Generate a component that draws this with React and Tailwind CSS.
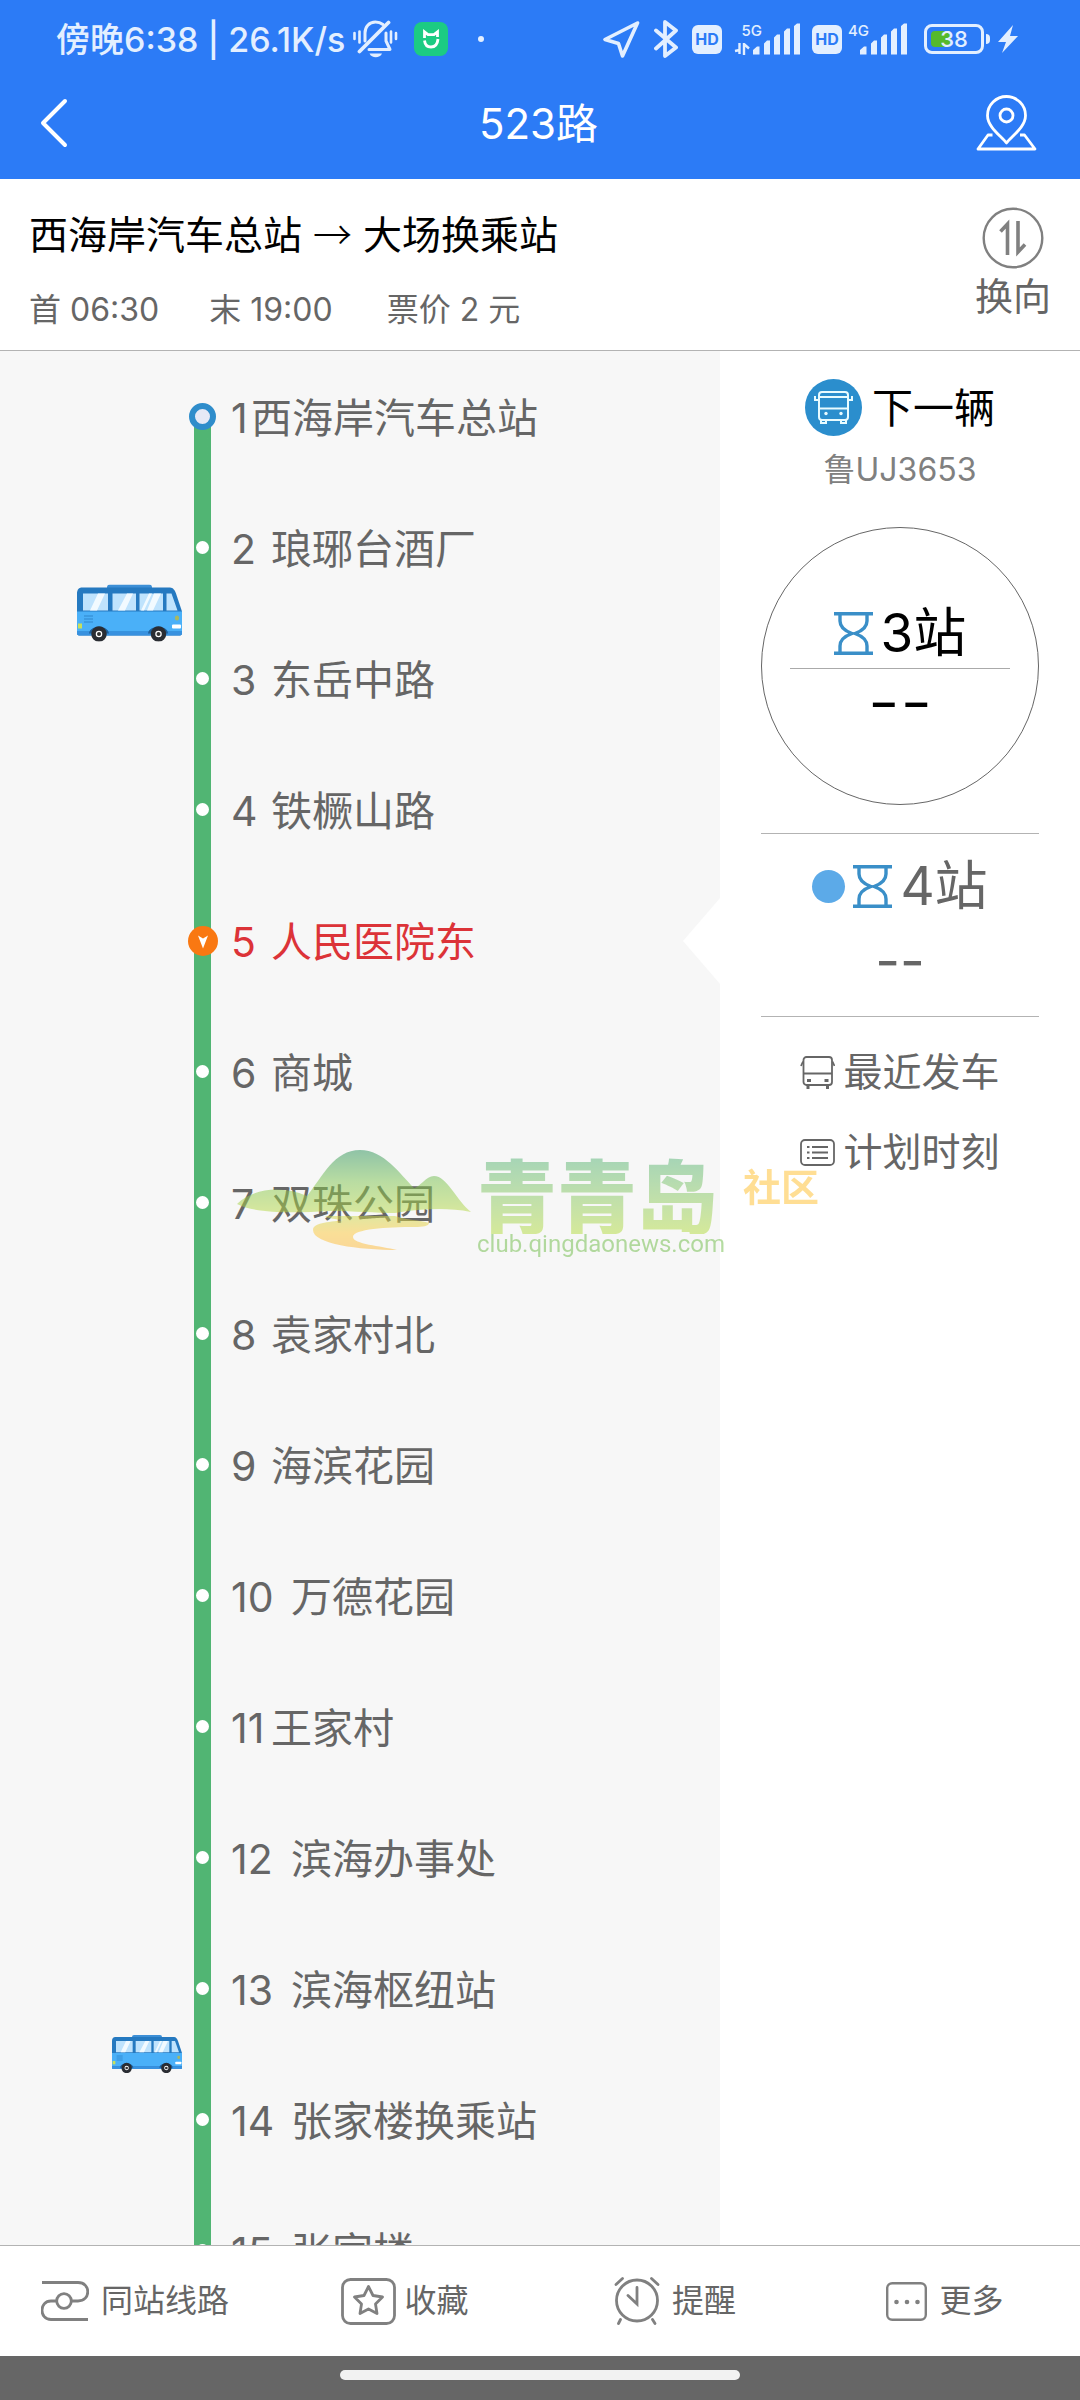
import React from 'react';

const stops = [
  { no: '1', name: '西海岸汽车总站', numWidth: 'w-5', start: true },
  { no: '2', name: '琅琊台酒厂', numWidth: 'w-10', bus: 'large' },
  { no: '3', name: '东岳中路', numWidth: 'w-10' },
  { no: '4', name: '铁橛山路', numWidth: 'w-10' },
  { no: '5', name: '人民医院东', numWidth: 'w-10', current: true },
  { no: '6', name: '商城', numWidth: 'w-10' },
  { no: '7', name: '双珠公园', numWidth: 'w-10' },
  { no: '8', name: '袁家村北', numWidth: 'w-10' },
  { no: '9', name: '海滨花园', numWidth: 'w-10' },
  { no: '10', name: '万德花园', numWidth: 'w-15' },
  { no: '11', name: '王家村', numWidth: 'w-10' },
  { no: '12', name: '滨海办事处', numWidth: 'w-15' },
  { no: '13', name: '滨海枢纽站', numWidth: 'w-15', bus: 'small' },
  { no: '14', name: '张家楼换乘站', numWidth: 'w-15' },
  { no: '15', name: '张家楼', numWidth: 'w-15' },
];

/* ---------- Icons ---------- */

const MutedBell = () => (
  <svg className="w-[45px] h-[38px]" viewBox="0 0 45 38" fill="none" stroke="currentColor" strokeWidth="3" strokeLinecap="round">
    <path d="M1.500 13v6M6.500 11.500v11M38 11.500v11M43 13v6" strokeWidth="2.600" />
    <path d="M35.500 2.500L6.500 31.500" strokeWidth="3.800" />
    <path d="M12 21V13C12 7 16 2 22.500 2c3 0 5.500 1 7.500 2.500" />
    <path d="M33 13v8l4 8.500H16" strokeLinejoin="round" />
    <path d="M16.500 33.500h12.500c-2 5-10.500 5-12.500 0z" fill="currentColor" stroke="none" />
  </svg>
);

const MiIcon = () => (
  <svg className="w-[34px] h-[34px]" viewBox="0 0 34 34" fill="none">
    <rect width="34" height="34" rx="8" fill="#1ccb83" />
    <path d="M10.500 16V9.800l3.500 2.800h6l3.500-2.800v5.200" stroke="#fff" strokeWidth="2.800" />
    <path d="M10.500 18.500c.5 4.500 3 6.500 6.500 6.500s6.500-2.500 7-8" stroke="#fff" strokeWidth="2.800" />
  </svg>
);

const LocationArrow = () => (
  <svg className="w-[37px] h-[38px]" viewBox="0 0 37 38" fill="none" stroke="currentColor" strokeWidth="3.600" strokeLinejoin="round">
    <path d="M34.500 3L2 19.500l13.500 4L19.500 36z" />
  </svg>
);

const BluetoothIcon = () => (
  <svg className="w-6 h-[38px]" viewBox="0 0 24 38" fill="none" stroke="currentColor" strokeWidth="3.800" strokeLinecap="round" strokeLinejoin="round">
    <path d="M2 10.500L22 27.500 11 36V2l11 8.500L2 28.500" />
  </svg>
);

const Bars = () => (
  <svg className="w-12 h-8" viewBox="0 0 48 32" fill="currentColor">
    <path d="M0 31.500v-4.500l4-3.500h2.500v8zM11 31.500V20.500l3-3h3v14zM21 31.500V14.500l3-3h3v20zM31 31.500V8.500l3-3h3v26zM41 31.500V3l3-2.500h3v31z" />
  </svg>
);

const BoltIcon = () => (
  <svg className="w-5 h-7" viewBox="0 0 20 28" fill="currentColor">
    <path d="M15 0L0 17h8L4 28 20 11h-8z" />
  </svg>
);

const BackIcon = () => (
  <svg className="w-7 h-[50px]" viewBox="0 0 28 50" fill="none" stroke="currentColor" strokeWidth="4" strokeLinecap="round" strokeLinejoin="round">
    <path d="M25 3L3 25l22 22" />
  </svg>
);

const MapPinIcon = () => (
  <svg className="w-[61px] h-14" viewBox="0 0 61 56" fill="none" stroke="currentColor" strokeWidth="2.800" strokeLinejoin="round">
    <path d="M30.500 48C25 41 11.500 32 11.500 20.500a19 19 0 0 1 38 0C49.500 32 36 41 30.500 48z" />
    <circle cx="30.500" cy="20.500" r="6.500" />
    <path d="M16.500 40h-4.500L2 54h57L48.500 40H44" />
  </svg>
);

const SwapIcon = () => (
  <svg className="w-[62px] h-[62px]" viewBox="0 0 62 62" fill="none" stroke="#808080">
    <circle cx="31" cy="31" r="29.300" strokeWidth="2.400" />
    <path d="M25.500 48V17l-7 7.500M36 14v31l7-7.500" strokeWidth="3.600" />
  </svg>
);

const Bus = ({ className }) => (
  <svg className={className} viewBox="0 0 105 57">
    <rect x="30" y="0" width="45" height="8" rx="3" fill="#3d8fd6" />
    <path d="M5 3h88c3 0 5 3 6 6l6 18v22c0 1-1 2-2 2H2c-1 0-2-1-2-2V9c0-4 2-6 5-6z" fill="#2579c0" />
    <path d="M0 27h105v20H0z" fill="#4ab0f8" />
    <path d="M0 47h105v2c0 1-1 2-2 2H2c-1 0-2-1-2-2z" fill="#3891df" />
    <path d="M6 9h25v17H6zM35.500 9h23.500v17H35.500zM62.500 9H86v17H62.500zM89.500 9h5l6 17h-11z" fill="#bfe3fd" />
    <path d="M21 9h7l-8 17h-7zM50 9h6l-8 17h-7zM77 9h7l-8 17h-6zM72 9h3l-8 17h-3z" fill="#f2faff" />
    <path d="M7 31.500h9M7 34.500h9M7 37.500h9" stroke="#2f85cc" strokeWidth="1.200" />
    <rect x="1" y="39" width="4" height="5" fill="#c8e05c" />
    <rect x="98" y="31" width="4" height="5" rx="2" fill="#a8b860" />
    <rect x="95" y="40" width="9" height="4" rx="1" fill="#fff" />
    <path d="M12 49c1-9 19-9 20 0zM71 49c1-9 20-9 20 0z" fill="#1d5e98" />
    <g fill="#fff" stroke="#2a2d33" strokeWidth="4.500">
      <circle cx="22" cy="49.500" r="5.500" />
      <circle cx="81.500" cy="49.500" r="5.500" />
    </g>
    <circle cx="22" cy="49.500" r="2" fill="#333" />
    <circle cx="81.500" cy="49.500" r="2" fill="#333" />
  </svg>
);

const NextBusIcon = () => (
  <svg className="w-[57px] h-[57px]" viewBox="0 0 57 57" fill="none" stroke="#e8fbff" strokeWidth="2">
    <circle cx="28.500" cy="28.500" r="28.500" fill="#2b8ecd" stroke="none" />
    <rect x="14" y="13" width="29" height="28" rx="3" />
    <path d="M14 18h29M14 29.500h29M14 21h-4v-4M43 21h4v-4M16 41v3h5v-3M36 41v3h5v-3" />
    <circle cx="21" cy="34.500" r="1.700" fill="#e8fbff" stroke="none" />
    <circle cx="36" cy="34.500" r="1.700" fill="#e8fbff" stroke="none" />
  </svg>
);

const Hourglass = () => (
  <svg className="w-[39px] h-[43px]" viewBox="0 0 39 43" fill="none" stroke="#3a8fc8" strokeWidth="3.400">
    <path d="M0 1.800h39M0 41.200h39" />
    <path d="M6 2v7c0 6 5 10 12 12.500C11 24 6 28 6 34v7M33 2v7c0 6-5 10-12 12.500C28 24 33 28 33 34v7" />
  </svg>
);

const BusOutline = () => (
  <svg className="w-[35px] h-[33px]" viewBox="0 0 35 33" fill="none" stroke="#666" strokeWidth="1.800">
    <rect x="3.500" y="1" width="28.500" height="28" rx="3" />
    <path d="M3.500 17.500h28.500M3 5.500L1 10M32.500 5.500l2 4.500" />
    <path d="M7 24.500h4M24.500 24.500h4M8 29v4M27.500 29v4" strokeWidth="3" />
  </svg>
);

const ListIcon = () => (
  <svg className="w-[35px] h-[27px]" viewBox="0 0 35 27" fill="none" stroke="#666" strokeWidth="1.800">
    <rect x="1" y="1" width="33" height="25" rx="4" />
    <path d="M12 8h16M12 13.500h16M12 19h16M7 8h2.500M7 13.500h2.500M7 19h2.500" strokeWidth="2.200" />
  </svg>
);

const SameStopIcon = () => (
  <svg className="w-12 h-[42px]" viewBox="0 0 48 42" fill="none" stroke="#808080" strokeWidth="2.800">
    <path d="M1 2.500h36c13 0 13 18.500 0 18.500h-7M47 39.500H10c-12 0-12-18.500 0-18.500h6" />
    <circle cx="23" cy="21" r="7.300" />
  </svg>
);

const FavoriteIcon = () => (
  <svg className="w-[55px] h-[47px]" viewBox="0 0 55 47" fill="none" stroke="#808080" strokeWidth="2.800" strokeLinejoin="round">
    <rect x="1.500" y="1.500" width="52" height="44" rx="8" />
    <path d="M27.500 8.500l4.500 9 9.500 1.500-7 7 1.500 9.500-8.500-4.500-8.500 4.500L20.500 26l-7-7 9.500-1.500z" />
  </svg>
);

const AlarmIcon = () => (
  <svg className="w-[46px] h-12" viewBox="0 0 46 48" fill="none" stroke="#808080" strokeWidth="2.800" strokeLinecap="round">
    <circle cx="23" cy="23.500" r="20.500" />
    <path d="M23 10.500V27L14 18.500M2 7.500L8.500 1.500M44 7.500L37.500 1.500M6.500 42.500L4.500 46.500M38.500 42.500L41 46.500" />
  </svg>
);

const MoreIcon = () => (
  <svg className="w-[41px] h-[39px]" viewBox="0 0 41 39" fill="none" stroke="#808080" strokeWidth="2.400">
    <rect x="1.200" y="1.200" width="38.600" height="36.600" rx="5" />
    <g fill="#808080" stroke="none">
      <circle cx="10.500" cy="20" r="2.300" />
      <circle cx="21" cy="20" r="2.300" />
      <circle cx="31.500" cy="20" r="2.300" />
    </g>
  </svg>
);

const Mountain = () => (
  <svg className="w-[234px] h-[100px]" viewBox="0 0 234 100">
    <defs>
      <linearGradient id="hill" x1="0" y1="0" x2="0" y2="1">
        <stop offset="0" stopColor="#2a9159" />
        <stop offset="0.500" stopColor="#7cc34f" />
        <stop offset="1" stopColor="#b9da45" />
      </linearGradient>
      <linearGradient id="river" x1="0" y1="0" x2="0" y2="1">
        <stop offset="0" stopColor="#cdd94a" />
        <stop offset="0.500" stopColor="#fdc83a" />
        <stop offset="1" stopColor="#fdb83a" />
      </linearGradient>
    </defs>
    <path d="M0 54c14-14 42-20 70-8C86 26 97 0 123 0c24 0 40 24 54 38 6-1 12-12 20-12 13 0 22 24 37 36-26-5-50-3-76 1-20 0-40-2-66-2C60 63 18 64 0 54z" fill="url(#hill)" />
    <path d="M88 66h70c10 4 26 4 34 7 0 3-6 4-14 4-28 0-62 2-62 10 0 7 28 9 44 13-38 0-84-6-84-20 0-8 20-8 30-10-8-1-14-1-18-4z" fill="url(#river)" />
  </svg>
);

/* ---------- Sections ---------- */

const HdBadge = () => (
  <span className="flex items-center justify-center w-[30px] h-[29px] rounded-md bg-[#e3efff] text-[#2c7bf6] text-base leading-none font-bold">
    HD
  </span>
);

const StatusBar = () => (
  <div className="flex items-center justify-between h-[78px] pl-14 pr-[62px] text-[#e3efff]">
    <div className="flex items-center">
      <span className="text-[34px] leading-10 font-medium whitespace-pre pt-[2px]">傍晚6:38 | 26.1K/s</span>
      <span className="ml-2"><MutedBell /></span>
      <span className="ml-4"><MiIcon /></span>
      <span className="ml-[30px] w-[6px] h-[6px] rounded-full bg-[#e3efff]" />
    </div>
    <div className="flex items-center">
      <LocationArrow />
      <span className="ml-[14px]"><BluetoothIcon /></span>
      <span className="ml-[14px]"><HdBadge /></span>
      <div className="flex items-end h-8 ml-3">
        <div className="flex flex-col justify-between items-end h-8 -mr-[9px]">
          <span className="text-[15px] leading-none font-medium">5G</span>
          <svg className="w-4 h-3 mr-3" viewBox="0 0 16 12" fill="none" stroke="currentColor" strokeWidth="2.400">
            <path d="M1 8l4.500-1M5.500 11V0M10 12V1l5 4.500" />
          </svg>
        </div>
        <Bars />
      </div>
      <span className="ml-[11px]"><HdBadge /></span>
      <div className="flex items-end h-8 ml-[6px]">
        <span className="self-start text-[15px] leading-none font-medium -mr-[9px]">4G</span>
        <Bars />
      </div>
      <div className="flex items-center ml-4">
        <div className="relative flex items-center w-[60px] h-[30px] rounded-lg border-[3px] border-[#e3efff] p-1">
          <span className="w-5 h-4 rounded-sm bg-[#55b92c]" />
          <span className="absolute inset-0 flex items-center justify-center text-[22px] leading-none font-medium">38</span>
        </div>
        <span className="w-1 h-[10px] ml-[2px] rounded-r-sm bg-[#e3efff]" />
      </div>
      <span className="ml-2"><BoltIcon /></span>
    </div>
  </div>
);

const Header = () => (
  <header className="bg-[#2c7bf6] text-white">
    <StatusBar />
    <div className="grid grid-cols-[1fr_auto_1fr] items-center h-[101px] pl-10 pr-[43px] pb-3">
      <button aria-label="返回" className="justify-self-start">
        <BackIcon />
      </button>
      <h1 className="text-[42px] leading-[50px] pt-[2px]">523路</h1>
      <button aria-label="地图" className="justify-self-end">
        <MapPinIcon />
      </button>
    </div>
  </header>
);

const RouteInfo = () => (
  <section className="flex justify-between h-[172px] px-[29px] pt-7 border-b border-[#b3b3b3]">
    <div className="flex flex-col">
      <h2 className="text-[39px] leading-[50px] text-black">
        西海岸汽车总站 <span className="font-['Noto_Sans_CJK_SC',sans-serif] font-light">→</span> 大场换乘站
      </h2>
      <p className="flex mt-[30px] text-[32px] leading-10 text-[#666]">
        <span>首 06:30</span>
        <span className="ml-[50px]">末 19:00</span>
        <span className="ml-[54px]">票价 2 元</span>
      </p>
    </div>
    <button className="flex flex-col items-center gap-[2px] text-[38px] leading-[50px] text-[#666]">
      <SwapIcon />
      换向
    </button>
  </section>
);

const Marker = ({ stop }) => {
  if (stop.start) {
    return <span className="shrink-0 w-[27px] h-[27px] rounded-full border-[6px] border-[#2f8dcb] bg-[#e6e9f6]" />;
  }
  if (stop.current) {
    return (
      <svg className="shrink-0 w-[30px] h-[30px]" viewBox="0 0 30 30">
        <circle cx="15" cy="15" r="15" fill="#f97812" />
        <path d="M10 9.500l5 3 5-3-5 13z" fill="#fff" />
      </svg>
    );
  }
  return <span className="shrink-0 w-[13px] h-[13px] rounded-full bg-white" />;
};

const Stop = ({ stop }) => (
  <li className={`flex items-center h-[131px] shrink-0 text-[41px] leading-[50px] ${stop.current ? 'text-[#dc3338]' : 'text-[#666]'}`}>
    <div className="relative self-stretch w-[194px]">
      {stop.bus === 'large' && <Bus className="absolute right-3 top-full -translate-y-1/2 w-[105px] h-[57px]" />}
      {stop.bus === 'small' && <Bus className="absolute right-3 top-full -translate-y-1/2 w-[70px] h-[38px]" />}
    </div>
    <div
      className={`flex items-center justify-center self-stretch w-[17px] ${
        stop.start ? 'bg-linear-to-b from-transparent from-50% to-[#51b573] to-50%' : 'bg-[#51b573]'
      }`}
    >
      <Marker stop={stop} />
    </div>
    <a href="#stop" className="flex pl-5 pt-[2px]">
      <span className={stop.numWidth}>{stop.no}</span>
      <span>{stop.name}</span>
    </a>
    {stop.current && (
      <svg className="ml-auto w-[37px] h-[86px]" viewBox="0 0 37 86">
        <path d="M37 0v86L0 43z" fill="#fff" />
      </svg>
    )}
  </li>
);

const Arrivals = () => (
  <aside className="flex flex-col items-center w-1/3 px-[41px] pt-7">
    <div className="flex items-center gap-[10px]">
      <NextBusIcon />
      <span className="text-[41px] leading-[50px] text-black">下一辆</span>
    </div>
    <p className="text-[32px] leading-10 mt-[14px] text-[#808080]">鲁UJ3653</p>

    <div className="flex flex-col items-center w-full aspect-square mt-[37px] pt-[70px] rounded-full border border-[#666]">
      <div className="flex items-center justify-center gap-2 w-4/5 h-[71px] border-b border-[#aaa]">
        <Hourglass />
        <span className="text-[53px] leading-[60px] text-black">3站</span>
      </div>
      <p className="text-[72px] leading-16 font-light text-black">--</p>
    </div>

    <div className="flex flex-col items-center w-full h-[184px] mt-7 pt-[22px] border-y border-[#b3b3b3]">
      <div className="flex items-center">
        <span className="w-[33px] h-[33px] mr-2 rounded-full bg-[#5caae8]" />
        <Hourglass />
        <span className="text-[53px] leading-[60px] ml-2 text-[#666]">4站</span>
      </div>
      <p className="text-[54px] leading-[70px] mt-[10px] text-[#666]">--</p>
    </div>

    <div className="flex flex-col gap-[30px] mt-[30px] text-[39px] leading-[50px] text-[#666]">
      <button className="flex items-center gap-2">
        <BusOutline />
        最近发车
      </button>
      <button className="flex items-center gap-2">
        <ListIcon />
        计划时刻
      </button>
    </div>
  </aside>
);

const Watermark = () => (
  <div className="absolute left-[237px] top-[799px] flex items-start opacity-50 pointer-events-none">
    <Mountain />
    <div className="flex flex-col ml-[6px]">
      <span className="text-[80px] leading-[84px] font-black font-['Noto_Sans_CJK_SC',sans-serif] text-transparent bg-clip-text bg-linear-to-b from-[#4bb07a] to-[#b4dc3c]">
        青青岛
      </span>
      <span className="text-[24px] leading-5 text-[#6dbb46] font-['Roboto',sans-serif]">club.qingdaonews.com</span>
    </div>
    <span className="ml-[18px] mt-3 text-[38px] leading-[50px] font-bold text-[#ffbf2c]">社区</span>
  </div>
);

const actions = [
  { label: '同站线路', icon: SameStopIcon, gap: 'gap-3' },
  { label: '收藏', icon: FavoriteIcon, gap: 'gap-2' },
  { label: '提醒', icon: AlarmIcon, gap: 'gap-3' },
  { label: '更多', icon: MoreIcon, gap: 'gap-3' },
];

const BottomBar = () => (
  <nav className="grid grid-cols-4 h-[111px] bg-white border-t border-[#b3b3b3] text-[32px] leading-10 text-[#666]">
    {actions.map(({ label, icon: Icon, gap }) => (
      <button key={label} className={`flex items-center justify-center ${gap}`}>
        <Icon />
        {label}
      </button>
    ))}
  </nav>
);

const App = () => {
  return (
    <div className="flex flex-col h-screen bg-white font-['Inter','Noto_Sans_CJK_SC',sans-serif]">
      <Header />
      <RouteInfo />
      <main className="relative flex flex-1 min-h-0 overflow-hidden">
        <ol className="flex flex-col w-2/3 bg-[#f7f7f7]">
          {stops.map((stop) => (
            <Stop key={stop.no} stop={stop} />
          ))}
        </ol>
        <Arrivals />
        <Watermark />
      </main>
      <BottomBar />
      <div className="flex justify-center h-11 pt-[14px] bg-[#666]">
        <span className="w-[400px] h-[10px] rounded-full bg-[#f2f2f2]" />
      </div>
    </div>
  );
};

export default App;
